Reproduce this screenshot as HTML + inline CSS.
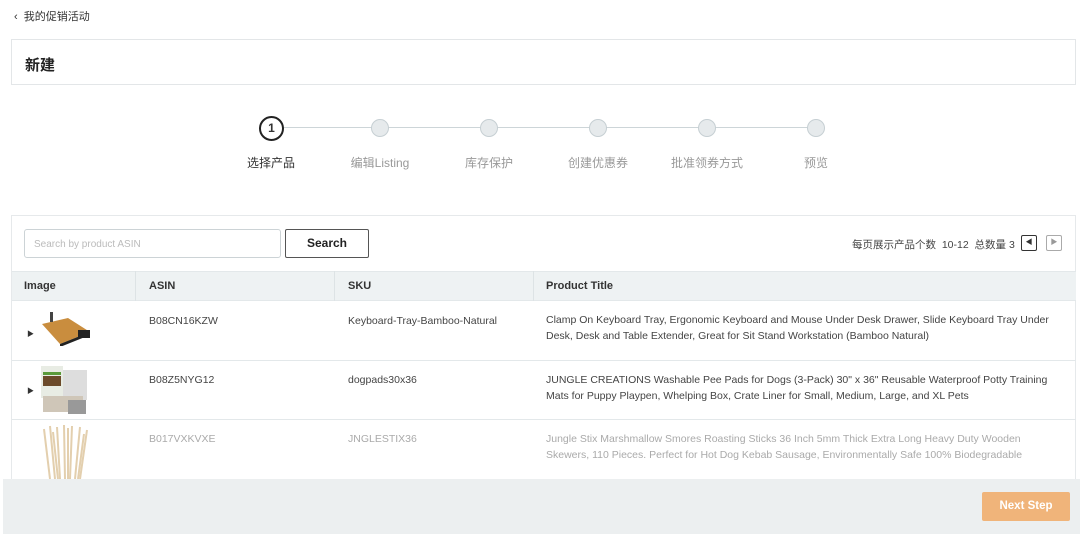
<!DOCTYPE html>
<html><head><meta charset="utf-8"><style>
*{box-sizing:border-box;margin:0;padding:0}
body{width:1080px;height:534px;overflow:hidden;background:#fff;font-family:"Liberation Sans","Noto Sans CJK SC",sans-serif;color:#333;position:relative}
.abs{position:absolute}
.back{left:14px;top:8px;font-size:11px;color:#333}
.head{left:11px;top:39px;width:1065px;height:46px;border:1px solid #e3e6e8}
.head span{position:absolute;left:13px;top:14px;font-size:15px;font-weight:bold;color:#222}
.line{top:127px;height:1px;background:#cdd5d8}
.dot{width:18px;height:18px;border-radius:50%;background:#e6eaec;border:1px solid #c6cfd3;top:119px}
.c1{left:259px;top:116px;width:25px;height:25px;border:2px solid #222;border-radius:50%;background:#fff;font-size:12px;font-weight:bold;text-align:center;line-height:21px}
.lbl{top:154px;font-size:12px;color:#999;width:100px;text-align:center}
.card{left:11px;top:215px;width:1065px;height:270px;border:1px solid #e6e9eb}
.inp{left:24px;top:229px;width:257px;height:29px;border:1px solid #ccd3d6;border-radius:3px;font-size:10px;color:#bbb;padding:9px 9px}
.btn{left:285px;top:229px;width:84px;height:29px;border:1px solid #555;border-radius:2px;font-size:12px;font-weight:bold;text-align:center;line-height:27px;color:#222}
.pg{top:237px;left:852px;font-size:10.5px;color:#444;white-space:nowrap}
.pb{top:235px;width:16px;height:16px;border:1px solid #aaa;border-radius:2px;font-size:7px;text-align:center;line-height:14px}
.th{left:12px;top:271px;width:1064px;height:30px;background:#eef2f3;border-top:1px solid #e3e8ea;border-bottom:1px solid #e3e8ea}
.th div{position:absolute;top:8px;font-size:11px;font-weight:bold;color:#333}
.vl{top:271px;width:1px;height:30px;background:#dde3e5}
.row{left:12px;width:1064px;border-bottom:1px solid #e3e8ea}
.t{font-size:10.5px;color:#444;line-height:15.5px}
.g{color:#aaa}
.foot{left:3px;top:479px;width:1077px;height:55px;background:#eceff0}
.next{left:982px;top:492px;width:88px;height:29px;background:#f0b47a;color:#fff;font-size:11.5px;font-weight:bold;text-align:center;line-height:29px;border-radius:2px}
</style></head><body>
<div class="abs back">‹&nbsp; 我的促销活动</div>
<div class="abs head"><span>新建</span></div>
<div class="abs line" style="left:284px;width:532px"></div>
<div class="abs c1">1</div>
<div class="abs dot" style="left:371px"></div>
<div class="abs dot" style="left:480px"></div>
<div class="abs dot" style="left:589px"></div>
<div class="abs dot" style="left:698px"></div>
<div class="abs dot" style="left:807px"></div>
<div class="abs lbl" style="left:221px;color:#333">选择产品</div>
<div class="abs lbl" style="left:330px">编辑Listing</div>
<div class="abs lbl" style="left:439px">库存保护</div>
<div class="abs lbl" style="left:548px">创建优惠券</div>
<div class="abs lbl" style="left:657px">批准领券方式</div>
<div class="abs lbl" style="left:766px">预览</div>
<div class="abs card"></div>
<div class="abs inp">Search by product ASIN</div>
<div class="abs btn">Search</div>
<div class="abs pg">每页展示产品个数 &nbsp;10-12 &nbsp;总数量 3</div>
<div class="abs pb" style="left:1021px;border-color:#333">◀</div>
<div class="abs pb" style="left:1046px;color:#999">▶</div>
<div class="abs th"><div style="left:12px">Image</div><div style="left:137px">ASIN</div><div style="left:336px">SKU</div><div style="left:534px">Product Title</div></div>
<div class="abs vl" style="left:135px"></div><div class="abs vl" style="left:334px"></div><div class="abs vl" style="left:533px"></div>
<div class="abs row" style="top:301px;height:60px"></div>
<div class="abs row" style="top:361px;height:59px"></div>
<div class="abs" style="left:27px;top:329px;font-size:7px">▶</div>
<div class="abs" style="left:27px;top:386px;font-size:7px">▶</div>
<svg class="abs" style="left:38px;top:310px" width="56" height="36"><path d="M4 14 L30 8 L52 22 L22 34 Z" fill="#c98d3e"/><path d="M22 34 L52 22 L52 25 L22 37Z" fill="#222"/><rect x="40" y="20" width="12" height="8" fill="#222"/><rect x="12" y="2" width="3" height="10" fill="#444"/></svg>
<svg class="abs" style="left:38px;top:364px" width="52" height="52"><rect x="3" y="2" width="22" height="32" fill="#e8ece4"/><rect x="5" y="12" width="18" height="10" fill="#6b4a2a"/><rect x="5" y="8" width="18" height="3" fill="#5a9a3a"/><rect x="25" y="6" width="24" height="30" fill="#ddd"/><rect x="5" y="32" width="40" height="16" fill="#cfc6b8"/><rect x="30" y="36" width="18" height="14" fill="#999"/></svg>
<svg class="abs" style="left:40px;top:424px" width="52" height="55"><g stroke="#e3cfae" stroke-width="2"><path d="M10 55 L4 5"/><path d="M15 55 L10 2"/><path d="M20 55 L17 3"/><path d="M25 55 L24 1"/><path d="M30 55 L32 2"/><path d="M35 55 L40 3"/><path d="M40 55 L47 6"/><path d="M28 55 L28 4"/><path d="M18 55 L13 8"/><path d="M38 55 L44 10"/></g></svg>
<div class="abs t" style="left:149px;top:314px">B08CN16KZW</div>
<div class="abs t" style="left:348px;top:314px">Keyboard-Tray-Bamboo-Natural</div>
<div class="abs t" style="left:546px;top:313px;width:525px">Clamp On Keyboard Tray, Ergonomic Keyboard and Mouse Under Desk Drawer, Slide Keyboard Tray Under Desk, Desk and Table Extender, Great for Sit Stand Workstation (Bamboo Natural)</div>
<div class="abs t" style="left:149px;top:373px">B08Z5NYG12</div>
<div class="abs t" style="left:348px;top:373px">dogpads30x36</div>
<div class="abs t" style="left:546px;top:373px;width:525px">JUNGLE CREATIONS Washable Pee Pads for Dogs (3-Pack) 30" x 36" Reusable Waterproof Potty Training Mats for Puppy Playpen, Whelping Box, Crate Liner for Small, Medium, Large, and XL Pets</div>
<div class="abs t g" style="left:149px;top:432px">B017VXKVXE</div>
<div class="abs t g" style="left:348px;top:432px">JNGLESTIX36</div>
<div class="abs t g" style="left:546px;top:432px;width:505px">Jungle Stix Marshmallow Smores Roasting Sticks 36 Inch 5mm Thick Extra Long Heavy Duty Wooden Skewers, 110 Pieces. Perfect for Hot Dog Kebab Sausage, Environmentally Safe 100% Biodegradable</div>
<div class="abs foot"></div>
<div class="abs next">Next Step</div>
</body></html>
